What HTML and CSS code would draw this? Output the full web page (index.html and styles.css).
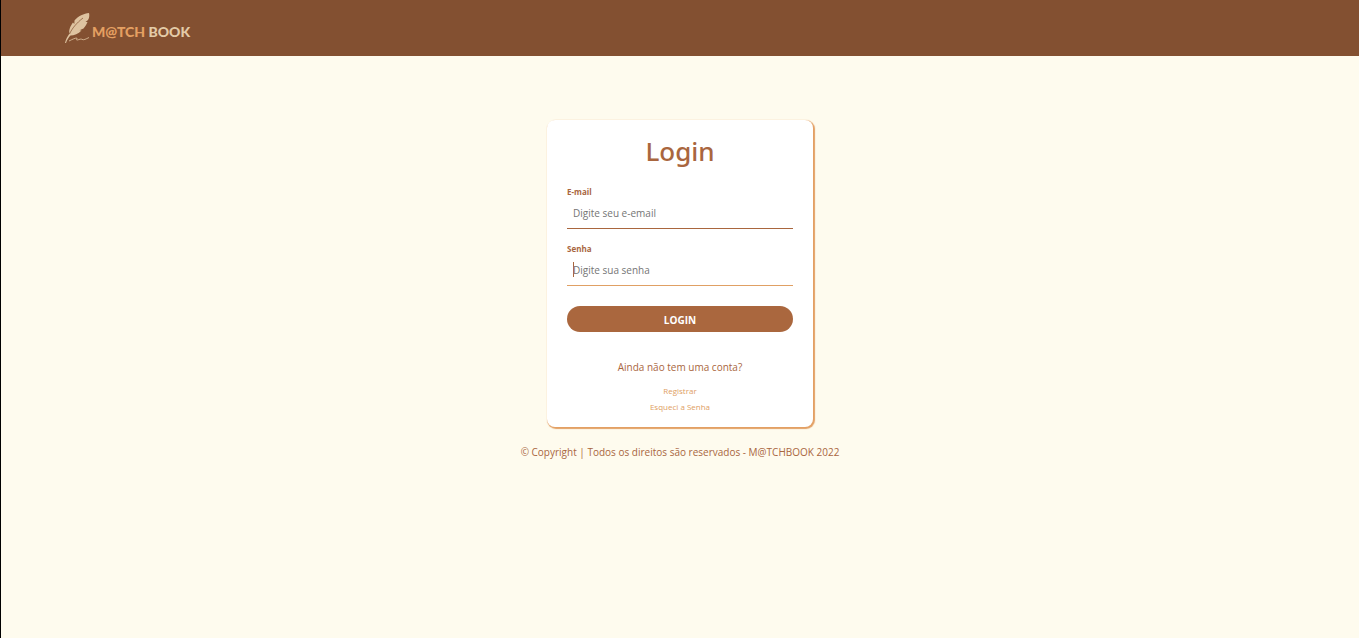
FILE: index.html
```html
<!DOCTYPE html>
<html lang="pt-BR">
<head>
<meta charset="utf-8">
<meta name="viewport" content="width=device-width, initial-scale=1">
<title>Login - M@TCH BOOK</title>
<link rel="stylesheet" href="styles.css">
</head>
<body>
<header class="topbar">
  <a class="brand" href="#">
    <svg class="quill" viewBox="0 0 26 32" aria-hidden="true">
      <path class="feather" d="M24 1C19 1.500 13 4 9.500 8.500L9.300 12L8 10.500C5.500 14 3.500 18 4.500 21.500C2.500 24.500 0.700 27.500 0 31L1 31C2 28 3.500 25.500 5.500 23.500C9 23.500 13.500 22 16.500 18.500L14.500 18.200L18.500 16.500C20.500 14 22 11.500 22.500 10L20.500 10L23 8C24.500 5.500 24.500 3 24 1Z"/>
      <path class="shaft" d="M4.500 22C7 16.500 11.500 11 18 6"/>
      <path class="stroke" d="M4 29C7 27.500 11 25.500 12 26.200C12.500 27 10.500 28.300 12.500 28C14.500 27.500 16 26.500 17 27.400C18.500 28.400 21 27 24 25.500"/>
    </svg>
    <span class="name"><span class="accent">M@TCH</span> BOOK</span>
  </a>
</header>
<main class="page">
  <form class="card">
    <h1 class="title">Login</h1>
    <div class="field">
      <label class="label" for="email">E-mail</label>
      <input class="input" id="email" type="email" placeholder="Digite seu e-email">
    </div>
    <div class="field">
      <label class="label" for="senha">Senha</label>
      <input class="input active" id="senha" type="password" placeholder="Digite sua senha">
    </div>
    <button class="submit" type="button">LOGIN</button>
    <p class="question">Ainda não tem uma conta?</p>
    <nav class="links">
      <a class="link" href="#">Registrar</a>
      <a class="link" href="#">Esqueci a Senha</a>
    </nav>
  </form>
</main>
<footer class="footer">© Copyright | Todos os direitos são reservados - M@TCHBOOK 2022</footer>
</body>
</html>
```
FILE: styles.css
```css
* {
  box-sizing: border-box;
}

body {
  min-height: 100vh;
  margin: 0;
  border-left: 1px solid #000;
  background: #fefbee;
  color: #a9663e;
  font: 10px/16px "Open Sans", "Noto Sans", sans-serif;
}

.topbar {
  display: flex;
  align-items: center;
  height: 56px;
  padding: 0 64px;
  background: #835031;
}

.brand {
  display: flex;
  align-items: center;
  gap: 1px;
  text-decoration: none;
}

.quill {
  width: 26px;
  height: 32px;
  fill: none;
}

.feather {
  fill: #dec3a0;
}

.shaft {
  stroke: #835031;
  stroke-width: 0.7;
}

.stroke {
  stroke: #dec3a0;
  stroke-width: 0.8;
}

.name {
  padding-top: 8px;
  color: #e3cba8;
  font: 900 14px/16px Lato, sans-serif;
  white-space: nowrap;
}

.accent {
  color: #e5a062;
}

.page {
  display: flex;
  justify-content: center;
  padding-top: 64px;
}

.card {
  display: flex;
  flex-direction: column;
  width: 266px;
  padding: 12px 20px;
  border-radius: 8px;
  background: #fff;
  box-shadow: 1px 1px 1px 1px #e3a064;
}

.title {
  margin: 0 0 14px;
  font-family: "Noto Sans", "Open Sans", sans-serif;
  font-size: 26px;
  font-weight: 500;
  line-height: 38px;
  text-align: center;
}

.field {
  display: flex;
  flex-direction: column;
  margin-bottom: 12px;
}

.label {
  font-size: 8px;
  font-weight: 700;
  line-height: 16px;
}

.input {
  width: 100%;
  height: 29px;
  padding: 0 6px 2px;
  border: 0;
  border-bottom: 1px solid #a9663e;
  outline: 0;
  background: transparent;
  color: #a9663e;
  font: inherit;
}

.input::placeholder {
  color: #757575;
  opacity: 1;
}

.input.active {
  border-color: #e0a064;
  background: linear-gradient(#a9663e, #a9663e) 6px 5px / 1px 15px no-repeat;
}

.submit {
  height: 26px;
  margin: 8px 0 27px;
  padding: 2px 0 0;
  border: 0;
  border-radius: 13px;
  background: #aa673e;
  color: #fff;
  font: inherit;
  font-weight: 700;
}

.question {
  margin: 0 0 8px;
  text-align: center;
}

.links {
  display: flex;
  flex-direction: column;
  align-items: center;
}

.link {
  color: #e0a064;
  font-size: 8px;
  text-decoration: none;
}

.footer {
  padding: 17px 0;
  text-align: center;
}
```
